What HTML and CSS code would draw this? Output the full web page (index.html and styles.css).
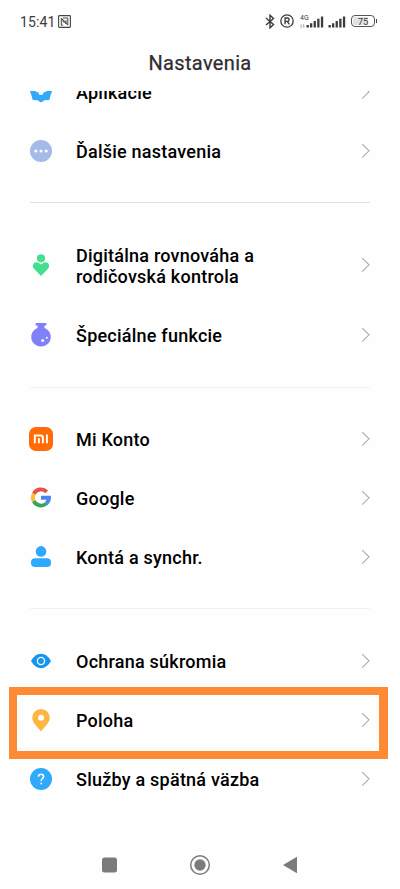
FILE: index.html
```html
<!DOCTYPE html>
<html lang="sk">
<head>
<meta charset="utf-8">
<title>Nastavenia</title>
<link rel="stylesheet" href="styles.css">
</head>
<body>
<svg width="0" height="0" class="defs"><symbol id="chev" viewBox="0 0 10 16"><path d="M1.2 1.2 8 7.8 1.2 14.6" fill="none" stroke="#aaa" stroke-width="1.1"/></symbol></svg>
<div class="phone">
  <div class="status">
    <span class="time">15:41</span>
    <svg class="nfc" width="13" height="13" viewBox="0 0 13 13" fill="none" stroke="#444"><rect x=".6" y=".6" width="11.800" height="11.800" rx=".8" stroke-width="1.100"/><path d="M5.200 10.200H3.300V3L8 8.800V5.200M5 3H9.800V10.200L5.200 4.800V7.500" stroke-width="1"/></svg>
    <div class="signals">
      <svg width="10" height="15" viewBox="0 0 10 15" fill="none" stroke="#3c3c3c" stroke-width="1.4"><path d="M1 4 8.5 10.5 5 13.8V1.2L8.5 4.5 1 11"/></svg>
      <svg class="reg" width="14" height="14" viewBox="0 0 14 14" fill="none" stroke="#3c3c3c"><circle cx="7" cy="7" r="6.2" stroke-width="1.3"/><path d="M5.1 10.3V4H7.4Q9.1 4 9.1 5.7T7.4 7.4H5.1M7.3 7.4 9.3 10.3" stroke-width="1.4"/></svg>
      <div class="net"><span>4G</span><svg width="5" height="4" viewBox="0 0 5 4" stroke="#999" stroke-width=".8" fill="none"><path d="M1.2 4V.8M0 1.7 1.2.5M3.6 0V3.3M4.8 2.3 3.6 3.5"/></svg></div>
      <svg class="bars1" width="18" height="12" viewBox="0 0 18 12" fill="#3c3c3c"><path d="M.5 9h2.4v2.5H.5zM4 7.3h2.3v4.2H4zM7.6 5h2.3v6.5H7.6zM11.2 2.7h2.3v8.8h-2.3zM14.9.5h2.3v11h-2.3z"/></svg>
      <svg class="bars2" width="18" height="12" viewBox="0 0 18 12" fill="#3c3c3c"><path d="M.5 9h2.4v2.5H.5zM4 7.3h2.3v4.2H4zM7.6 5h2.3v6.5H7.6zM11.2 2.7h2.3v8.8h-2.3zM14.9.5h2.3v11h-2.3z"/></svg>
      <div class="battery"><span>75</span></div><i class="tip"></i>
    </div>
  </div>
  <h1>Nastavenia</h1>
  <main class="viewport">
    <div class="list">
      <div class="row"><svg class="icon" viewBox="0 0 24 24"><path fill="#32a9fb" d="M1 4H6.500V11.500L9.500 12.500 10.200 14.800H13.800L14.500 12.500 17.500 11.500V4H23V11.500L21.800 14.500 20.300 20 15.500 20.300 12 22.600 8.500 20.300 3.700 20 2.200 14.500 1 11.500Z"/></svg><span>Aplikácie</span><svg class="chev"><use href="#chev"/></svg></div>
      <div class="row"><svg class="icon" viewBox="0 0 24 24"><circle cx="12" cy="12" r="11" fill="#a4bbe8"/><g fill="#fff"><circle cx="6.800" cy="12" r="1.500"/><circle cx="12" cy="12" r="1.500"/><circle cx="17.200" cy="12" r="1.500"/></g></svg><span>Ďalšie nastavenia</span><svg class="chev"><use href="#chev"/></svg></div>
      <hr class="strong">
      <div class="row tall"><svg class="icon" viewBox="0 0 24 24"><g fill="#43df91"><circle cx="12" cy="5.300" r="4.100"/><path d="M12 23 5 15.700C2.500 12.900 4.300 9.200 7.600 9.200 9.400 9.200 10.500 10.600 12 11.400 13.500 10.600 14.600 9.200 16.400 9.200 19.700 9.200 21.500 12.900 19 15.700Z"/></g></svg><span>Digitálna rovnováha a<br>rodičovská kontrola</span><svg class="chev"><use href="#chev"/></svg></div>
      <div class="row"><svg class="icon" viewBox="0 0 24 24"><path fill="#8080fa" d="M8 0H16Q17.600 0 17.600 1.200T16.300 2.500H15.500V5A9.800 9.600 0 1 1 8.500 5V2.500H7.700Q6.400 2.500 6.400 1.200T8 0Z"/><circle cx="13.700" cy="17.500" r="1.500" fill="#fff"/><circle cx="17.800" cy="14.700" r="1" fill="#fff"/></svg><span>Špeciálne funkcie</span><svg class="chev"><use href="#chev"/></svg></div>
      <hr class="mid">
      <div class="row"><svg class="icon" viewBox="0 0 24 24"><rect width="24" height="24" rx="7" fill="#ff6b05"/><path fill="none" stroke="#fff" stroke-width="1.900" d="M5.800 16.200V8.500H11.500Q13.900 8.500 13.900 10.900V16.200M9.900 11.200V16.200M17.900 7.500V16.200"/></svg><span>Mi Konto</span><svg class="chev"><use href="#chev"/></svg></div>
      <div class="row"><svg class="icon" viewBox="0 0 24 24"><g fill="none" stroke-width="3.900"><path stroke="#e15446" d="M4.800 7.800A8 8 0 0 1 17.700 5.900"/><path stroke="#f8bd30" d="M4.800 7.800A8 8 0 0 0 4.800 15.200"/><path stroke="#3ba35a" d="M4.800 15.200A8 8 0 0 0 17.200 17.600"/><path stroke="#4c86ec" d="M12 11.800H20Q20 15.400 17.200 17.600"/></g></svg><span>Google</span><svg class="chev"><use href="#chev"/></svg></div>
      <div class="row"><svg class="icon" viewBox="0 0 24 24" fill="#2fa9fb"><circle cx="12" cy="6.400" r="5.300"/><rect x="2" y="13.200" width="20" height="8.800" rx="4"/></svg><span>Kontá a synchr.</span><svg class="chev"><use href="#chev"/></svg></div>
      <hr class="last">
      <div class="row"><svg class="icon" viewBox="0 0 24 24"><path fill="#1595ee" d="M2 12Q6 4.800 12 4.800T22 12Q18 19.200 12 19.200T2 12Z"/><circle cx="12" cy="12" r="3.600" fill="none" stroke="#fff" stroke-width="1.300"/></svg><span>Ochrana súkromia</span><svg class="chev"><use href="#chev"/></svg></div>
      <div class="row marked"><svg class="icon" viewBox="0 0 24 24"><path fill="#ffb640" d="M12 23.400C9.600 20.400 3.200 14.900 3.200 9.800A8.800 8.800 0 0 1 20.800 9.800C20.800 14.900 14.400 20.400 12 23.400Z"/><circle cx="12" cy="9.800" r="3" fill="#fff"/></svg><span>Poloha</span><svg class="chev"><use href="#chev"/></svg></div>
      <div class="row"><svg class="icon" viewBox="0 0 24 24"><circle cx="12" cy="12" r="11" fill="#2fa9fb"/><path d="M9.400 9.800Q9.400 7.200 12 7.200T14.600 9.500C14.600 11.300 12.200 11.600 12.200 14" fill="none" stroke="#fff" stroke-width="1.500"/><circle cx="12.200" cy="16.500" r="1" fill="#fff"/></svg><span>Služby a spätná väzba</span><svg class="chev"><use href="#chev"/></svg></div>
    </div>
  </main>
  <nav>
    <svg width="16" height="16"><rect x="0" y=".5" width="15" height="15" rx="2.500" fill="#7b7b7b"/></svg>
    <svg width="22" height="22" viewBox="0 0 22 22"><circle cx="11" cy="11" r="9.300" fill="none" stroke="#7b7b7b" stroke-width="1.500"/><circle cx="11" cy="11" r="5.700" fill="#7b7b7b"/></svg>
    <svg width="16" height="18" viewBox="0 0 16 18"><path d="M1 9 15 .8V17.200Z" fill="#7b7b7b"/></svg>
  </nav>
</div>
</body>
</html>
```
FILE: styles.css
```css
*, *::after { box-sizing: border-box; }
body { margin: 0; background: #fefefe; font-family: Roboto, sans-serif; color: #000; }
svg { display: block; flex: none; }
.defs { position: absolute; }
.phone { width: 400px; height: 889px; display: flex; flex-direction: column; overflow: hidden; }
.status { height: 42px; padding: 2px 23px 0 20px; display: flex; align-items: center; color: #3c3c3c; }
.time { font-size: 14px; letter-spacing: .1px; width: 38px; white-space: nowrap; }
.nfc { margin-top: -2px; }
.signals { margin-left: auto; display: flex; align-items: center; margin-top: -2px; }
.reg { margin-left: 5px; }
.net { width: 9px; height: 13px; margin-left: 6px; font-size: 7px; line-height: 7px; display: flex; flex-direction: column; gap: 2px; }
.bars1 { margin: 1px 0 0 -3px; }
.bars2 { margin: 1px 0 0 4px; }
.battery { width: 24px; height: 12px; margin-left: 5px; border: 1.5px solid #555; border-radius: 4px; background: linear-gradient(90deg, #e2e2e2 75%, #fff 75%) content-box; padding: 1px; font-size: 9.5px; line-height: 9px; text-align: center; }
.tip { width: 1.5px; height: 4px; background: #444; margin-left: .5px; }
h1 { margin: 0; height: 49px; text-align: center; font-size: 20px; line-height: 42px; font-weight: 400; letter-spacing: .35px; color: #2d2d2f; -webkit-text-stroke: .25px #2d2d2f; }
.viewport { height: 749px; overflow: hidden; }
.list { margin-top: -29px; padding: 0 29px; }
.row { height: 59px; display: flex; align-items: center; font-size: 18px; line-height: 21px; font-weight: 500; letter-spacing: .23px; position: relative; }
.row span { flex: 1; margin: 1px 0 0 23px; white-space: nowrap; }
.tall { height: 81px; padding-top: 1px; }
.icon { width: 24px; height: 24px; overflow: visible; }
.chev { width: 10px; height: 16px; }
hr { height: 1px; border: 0; background: #f0f0f0; margin: 22px 1px 21px; }
hr.strong { background: #dedede; }
hr.mid { margin-top: 23px; }
hr.last { margin-bottom: 22px; }
.marked::after { content: ""; position: absolute; left: -20px; top: -3px; width: 379px; height: 72px; border: 8px solid #ff8a34; border-right-width: 9px; }
nav { flex: 1; display: flex; justify-content: space-between; align-items: center; padding: 1px 102px 0; }
```
